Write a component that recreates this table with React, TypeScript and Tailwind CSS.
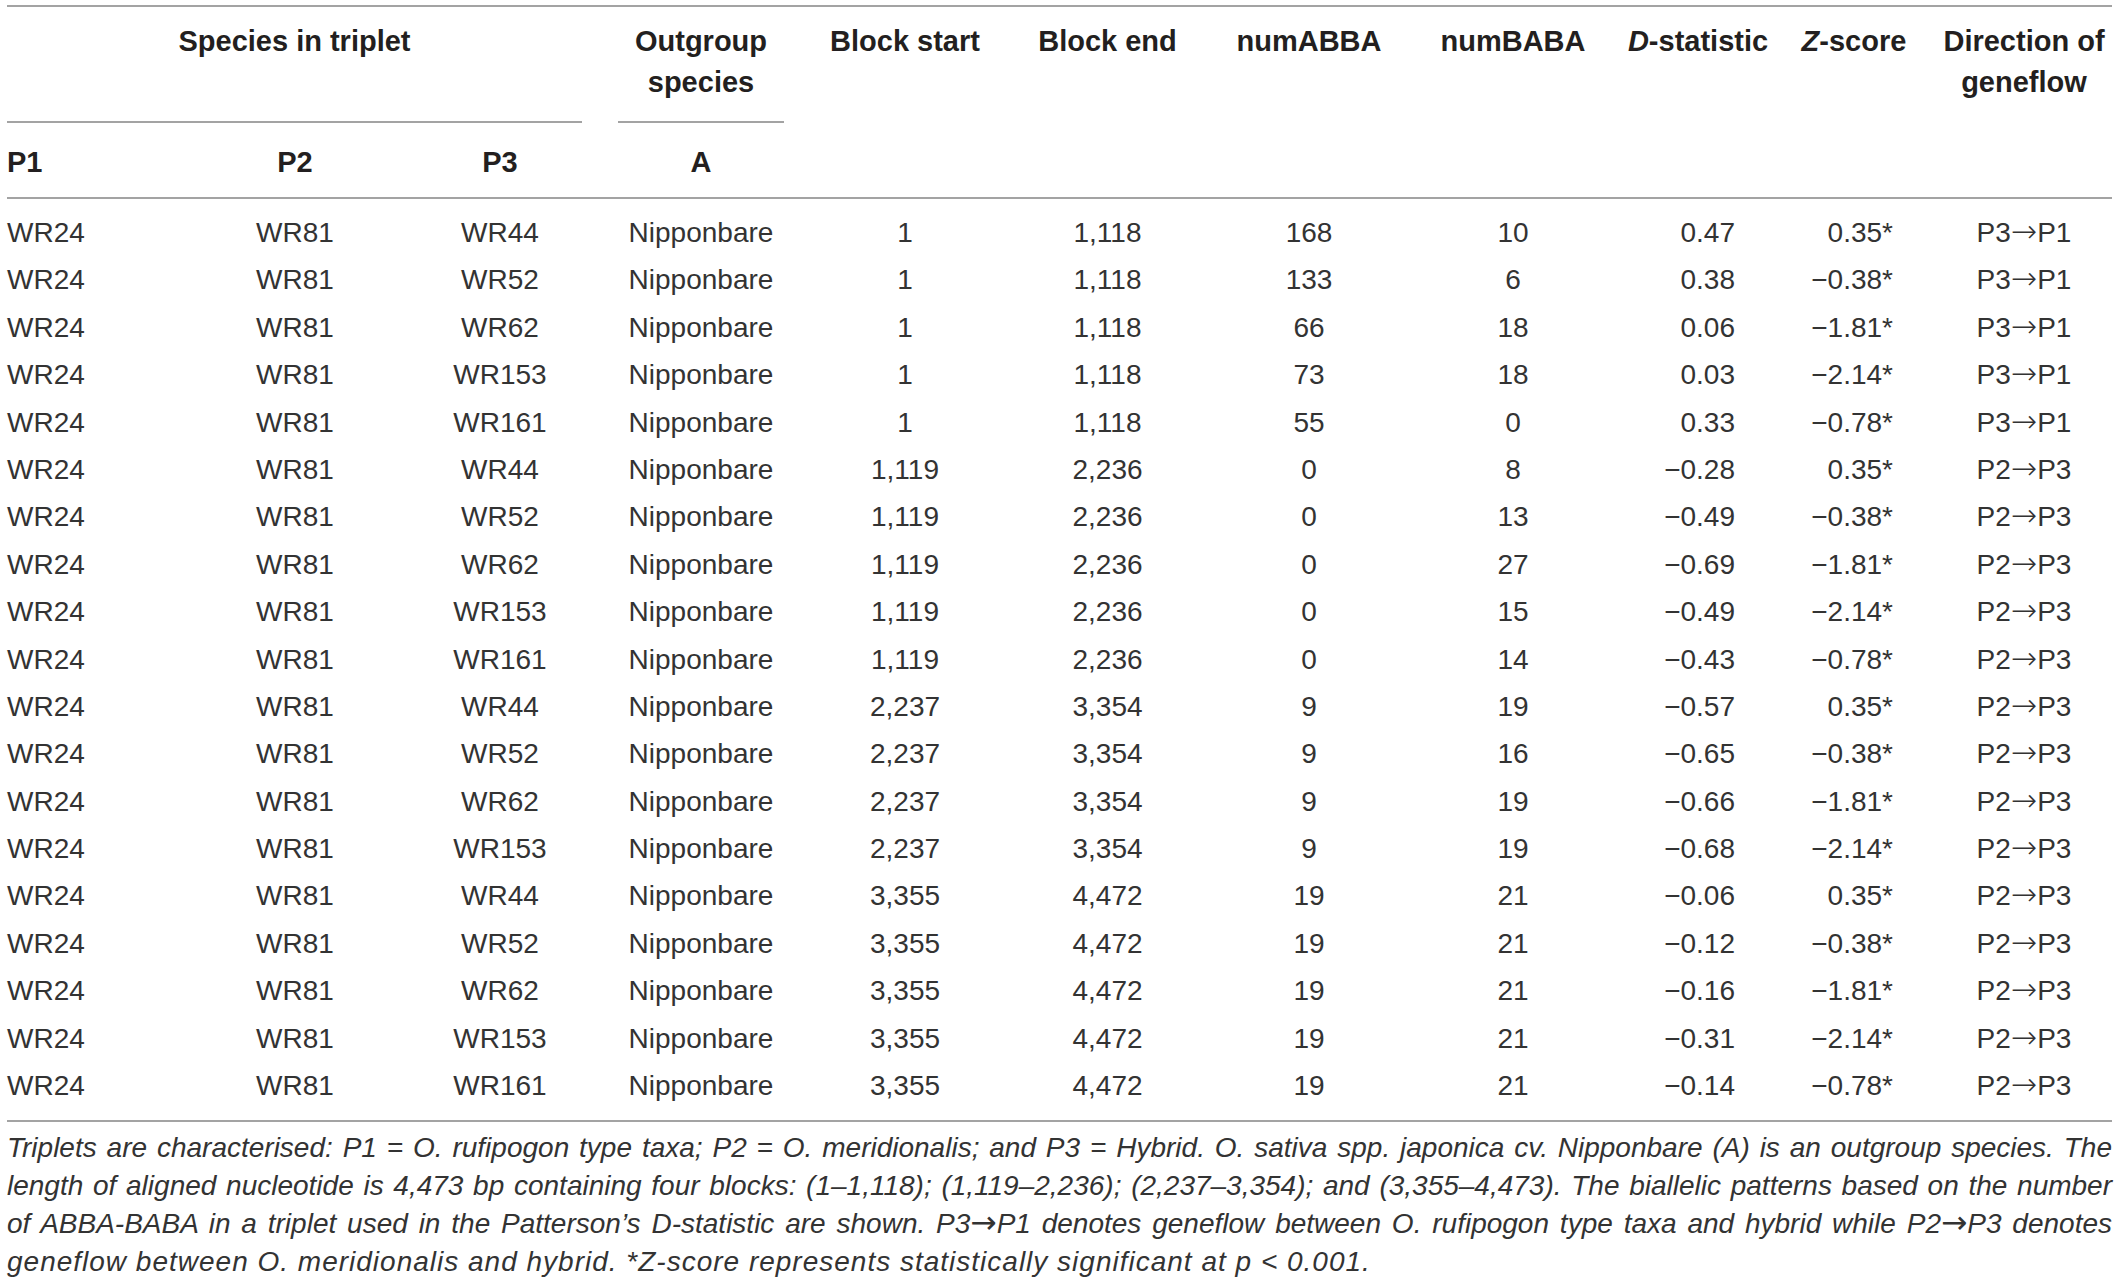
import React from 'react';

const rows = [
  ['WR24', 'WR81', 'WR44', 'Nipponbare', '1', '1,118', '168', '10', '0.47', '0.35*', 'P3|P1'],
  ['WR24', 'WR81', 'WR52', 'Nipponbare', '1', '1,118', '133', '6', '0.38', '−0.38*', 'P3|P1'],
  ['WR24', 'WR81', 'WR62', 'Nipponbare', '1', '1,118', '66', '18', '0.06', '−1.81*', 'P3|P1'],
  ['WR24', 'WR81', 'WR153', 'Nipponbare', '1', '1,118', '73', '18', '0.03', '−2.14*', 'P3|P1'],
  ['WR24', 'WR81', 'WR161', 'Nipponbare', '1', '1,118', '55', '0', '0.33', '−0.78*', 'P3|P1'],
  ['WR24', 'WR81', 'WR44', 'Nipponbare', '1,119', '2,236', '0', '8', '−0.28', '0.35*', 'P2|P3'],
  ['WR24', 'WR81', 'WR52', 'Nipponbare', '1,119', '2,236', '0', '13', '−0.49', '−0.38*', 'P2|P3'],
  ['WR24', 'WR81', 'WR62', 'Nipponbare', '1,119', '2,236', '0', '27', '−0.69', '−1.81*', 'P2|P3'],
  ['WR24', 'WR81', 'WR153', 'Nipponbare', '1,119', '2,236', '0', '15', '−0.49', '−2.14*', 'P2|P3'],
  ['WR24', 'WR81', 'WR161', 'Nipponbare', '1,119', '2,236', '0', '14', '−0.43', '−0.78*', 'P2|P3'],
  ['WR24', 'WR81', 'WR44', 'Nipponbare', '2,237', '3,354', '9', '19', '−0.57', '0.35*', 'P2|P3'],
  ['WR24', 'WR81', 'WR52', 'Nipponbare', '2,237', '3,354', '9', '16', '−0.65', '−0.38*', 'P2|P3'],
  ['WR24', 'WR81', 'WR62', 'Nipponbare', '2,237', '3,354', '9', '19', '−0.66', '−1.81*', 'P2|P3'],
  ['WR24', 'WR81', 'WR153', 'Nipponbare', '2,237', '3,354', '9', '19', '−0.68', '−2.14*', 'P2|P3'],
  ['WR24', 'WR81', 'WR44', 'Nipponbare', '3,355', '4,472', '19', '21', '−0.06', '0.35*', 'P2|P3'],
  ['WR24', 'WR81', 'WR52', 'Nipponbare', '3,355', '4,472', '19', '21', '−0.12', '−0.38*', 'P2|P3'],
  ['WR24', 'WR81', 'WR62', 'Nipponbare', '3,355', '4,472', '19', '21', '−0.16', '−1.81*', 'P2|P3'],
  ['WR24', 'WR81', 'WR153', 'Nipponbare', '3,355', '4,472', '19', '21', '−0.31', '−2.14*', 'P2|P3'],
  ['WR24', 'WR81', 'WR161', 'Nipponbare', '3,355', '4,472', '19', '21', '−0.14', '−0.78*', 'P2|P3'],
];

// one class per column: width + alignment
const cols = [
  'w-[183px] text-left',
  'w-[210px] text-center',
  'w-[200px] text-center',
  'w-[202px] text-center',
  'w-[206px] text-center',
  'w-[199px] text-center',
  'w-[204px] text-center',
  'w-[204px] text-center',
  'w-[166px] text-right pr-[46px]',
  'w-[146px] text-right pr-[34px]',
  'w-[185px] text-center pl-[9px]',
];

const Line = ({ className = '' }: { className?: string }) => (
  <div className={`h-[2px] bg-[#a3a3a3] ${className}`} />
);

// thin long arrow, like the one in the printed table
const Arrow = () => (
  <span className="font-['DejaVu_Sans',sans-serif] text-[1.12em] font-extralight leading-none">→</span>
);

const Flow = ({ v }: { v: string }) => {
  const [a, b] = v.split('|');
  return (
    <>
      {a}
      <Arrow />
      {b}
    </>
  );
};

const App = () => {
  return (
    <div
      className="min-h-screen bg-white pt-[5px] pl-[7px] text-[#231f20]"
      style={{ fontFamily: '"Liberation Sans", Arial, sans-serif' }}
    >
      <div className="w-[2105px]">
        <Line />

        {/* Header */}
        <div className="flex text-[29px] font-bold leading-[40.5px]">
          {/* Species in triplet group */}
          <div className="flex w-[593px] flex-col">
            <div className="h-[114px] pr-[18px] pt-[14px] text-center">Species in triplet</div>
            <Line className="mr-[18px]" />
            <div className="flex h-[74px] items-center pt-[4px]">
              <div className={cols[0]}>P1</div>
              <div className={cols[1]}>P2</div>
              <div className={cols[2]}>P3</div>
            </div>
          </div>

          {/* Outgroup */}
          <div className="flex w-[202px] flex-col">
            <div className="h-[114px] pt-[14px] text-center">
              Outgroup
              <br />
              species
            </div>
            <Line className="mx-[18px]" />
            <div className="flex h-[74px] items-center justify-center pt-[4px]">A</div>
          </div>

          <div className="w-[206px] pt-[14px] text-center">Block start</div>
          <div className="w-[199px] pt-[14px] text-center">Block end</div>
          <div className="w-[204px] pt-[14px] text-center">numABBA</div>
          <div className="w-[204px] pt-[14px] text-center">numBABA</div>
          <div className="w-[166px] pt-[14px] text-center">
            <i>D</i>-statistic
          </div>
          <div className="w-[146px] pt-[14px] text-center">
            <i>Z</i>-score
          </div>
          <div className="w-[185px] pt-[14px] pl-[9px] text-center">
            Direction of
            <br />
            geneflow
          </div>
        </div>

        <Line />

        {/* Body */}
        <div className="py-[10.3px] text-[28px] text-[#333333]">
          {rows.map((row, i) => (
            <div key={i} className="flex h-[47.4px] items-center">
              {row.map((cell, j) => (
                <div key={j} className={cols[j]}>
                  {j === 10 ? <Flow v={cell} /> : cell}
                </div>
              ))}
            </div>
          ))}
        </div>

        <Line />

        {/* Footnote */}
        <div className="mt-[7px] text-[28px] italic leading-[38px] text-[#333333]">
          <div className="whitespace-nowrap text-justify [text-align-last:justify]">
            Triplets are characterised: P1 = O. rufipogon type taxa; P2 = O. meridionalis; and P3 = Hybrid. O. sativa spp. japonica cv. Nipponbare (A) is an outgroup species. The
          </div>
          <div className="whitespace-nowrap text-justify [text-align-last:justify]">
            length of aligned nucleotide is 4,473 bp containing four blocks: (1–1,118); (1,119–2,236); (2,237–3,354); and (3,355–4,473). The biallelic patterns based on the number
          </div>
          <div className="whitespace-nowrap text-justify [text-align-last:justify]">
            of ABBA-BABA in a triplet used in the Patterson’s D-statistic are shown. P3
            <Arrow />
            P1 denotes geneflow between O. rufipogon type taxa and hybrid while P2
            <Arrow />
            P3 denotes
          </div>
          <div className="whitespace-nowrap tracking-[1px]">
            geneflow between O. meridionalis and hybrid. *Z-score represents statistically significant at p &lt; 0.001.
          </div>
        </div>
      </div>
    </div>
  );
};

export default App;
